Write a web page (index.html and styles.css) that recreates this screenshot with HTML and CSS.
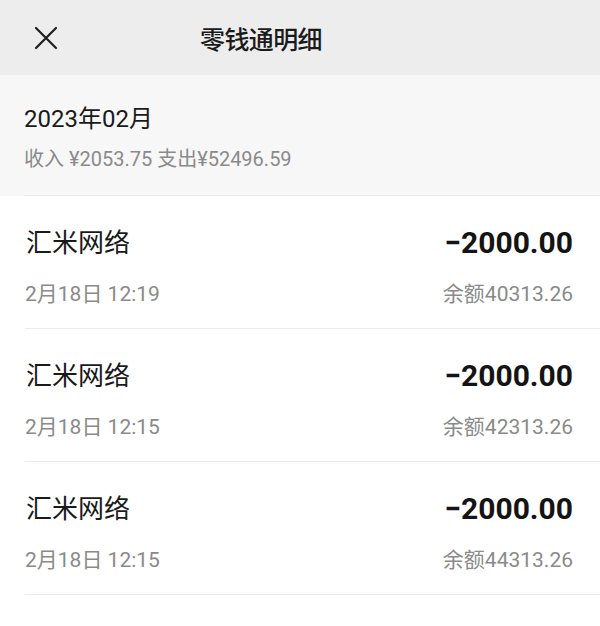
FILE: index.html
```html
<!DOCTYPE html>
<html lang="zh-CN">
<head>
<meta charset="utf-8">
<title>零钱通明细</title>
<link rel="stylesheet" href="styles.css">
</head>
<body>
<div class="page">
  <header class="topbar">
    <div class="close">
      <svg width="24" height="24" viewBox="0 0 24 24"><path d="M2 2L22 22M22 2L2 22" stroke="#1f1f1f" stroke-width="2.2" fill="none" stroke-linecap="round"/></svg>
    </div>
    <div class="title">零钱通明细</div>
  </header>
  <section class="summary">
    <div class="summary-inner">
      <div class="month">2023年02月</div>
      <div class="totals">收入 ¥2053.75 支出¥52496.59</div>
    </div>
  </section>
  <main class="list">
    <div class="row">
      <div class="line">
        <span class="name">汇米网络</span>
        <span class="amount">−2000.00</span>
      </div>
      <div class="line sub">
        <span>2月18日 12:19</span>
        <span>余额40313.26</span>
      </div>
    </div>
    <div class="row">
      <div class="line">
        <span class="name">汇米网络</span>
        <span class="amount">−2000.00</span>
      </div>
      <div class="line sub">
        <span>2月18日 12:15</span>
        <span>余额42313.26</span>
      </div>
    </div>
    <div class="row">
      <div class="line">
        <span class="name">汇米网络</span>
        <span class="amount">−2000.00</span>
      </div>
      <div class="line sub">
        <span>2月18日 12:15</span>
        <span>余额44313.26</span>
      </div>
    </div>
  </main>
</div>
</body>
</html>
```
FILE: styles.css
```css
html, body {
  margin: 0;
  padding: 0;
  background: #ffffff;
}
body {
  font-family: Roboto, "Noto Sans CJK SC", sans-serif;
  color: #1a1a1a;
  width: 600px;
  height: 626px;
  overflow: hidden;
}
.topbar {
  height: 75px;
  background: #ededed;
  display: flex;
  align-items: center;
}
.close {
  padding-left: 34px;
  display: flex;
  align-items: center;
}
.title {
  margin-left: 142px;
  font-size: 25px;
  font-weight: 500;
  color: #1a1a1a;
  letter-spacing: -0.6px;
  padding-top: 1px;
}
.summary {
  background: #f7f7f7;
}
.summary-inner {
  margin-left: 24px;
  padding-top: 28px;
  padding-bottom: 23px;
  border-bottom: 1px solid #e8e8e8;
}
.month {
  font-size: 24px;
  line-height: 32px;
  color: #1a1a1a;
}
.totals {
  margin-top: 11px;
  font-size: 20px;
  line-height: 26px;
  color: #8a8a8a;
}
.row {
  margin-left: 25px;
  padding-right: 27px;
  padding-top: 30px;
  padding-bottom: 20px;
  border-bottom: 1px solid #ececec;
}
.line {
  display: flex;
  justify-content: space-between;
  align-items: center;
}
.name {
  font-size: 26px;
  line-height: 34px;
  color: #1a1a1a;
  padding-left: 1px;
}
.amount {
  font-size: 30px;
  line-height: 34px;
  font-weight: 700;
  color: #141414;
}
.sub {
  margin-top: 20px;
  font-size: 21px;
  line-height: 28px;
  color: #8a8a8a;
}
```
